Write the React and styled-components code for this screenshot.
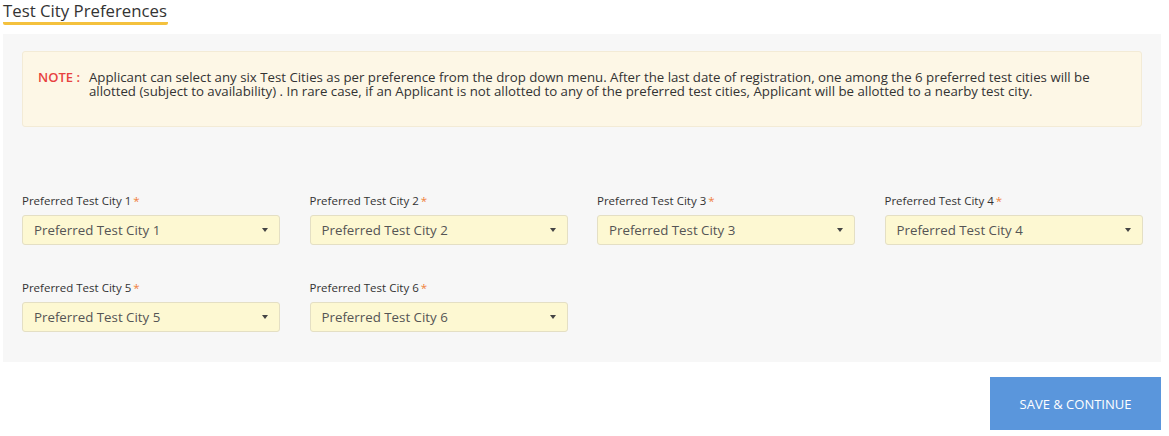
import React from "react"
import styled, { createGlobalStyle } from "styled-components"

const Global = createGlobalStyle`
  body{
    margin:0;
    background:#fff;
    font-family:"Open Sans","Noto Sans",Arial,sans-serif;
  }
`

const cities = [1, 2, 3, 4, 5, 6]

function App() {
  return (
    <Page>
      <Global />
      <Title>Test City Preferences</Title>
      <Panel>
        <Note>
          <NoteLabel>NOTE :</NoteLabel>
          <NoteText>
            Applicant can select any six Test Cities as per preference from the drop down menu. After the last date of registration, one among the 6 preferred test cities will be allotted (subject to availability) . In rare case, if an Applicant is not allotted to any of the preferred test cities, Applicant will be allotted to a nearby test city.
          </NoteText>
        </Note>
        <Grid>
          {cities.map(n => (
            <Field key={n}>
              <Label>
                Preferred Test City {n}<Star>*</Star>
              </Label>
              <Select>
                <span>Preferred Test City {n}</span>
                <Caret />
              </Select>
            </Field>
          ))}
        </Grid>
      </Panel>
      <Actions>
        <SaveButton>SAVE &amp; CONTINUE</SaveButton>
      </Actions>
    </Page>
  )
}

export default App

const Page = styled.div`
  padding:0 8px 0 3px;
`

const Title = styled.h2`
  display:inline-block;
  margin:0;
  padding:0 1px 3px 0;
  font-size:16.8px;
  font-weight:400;
  color:#333;
  line-height:17px;
  border-bottom:3px solid #f4c13d;
  border-radius:0 0 2px 2px;
`

const Panel = styled.div`
  margin-top:9px;
  background:#f7f7f7;
  padding:17px 19px 30px 19px;
`

const Note = styled.div`
  display:flex;
  background:#fdf7e6;
  border:1px solid #f3ebd6;
  border-radius:3px;
  padding:18px 15px 28px 15px;
`

const NoteLabel = styled.span`
  color:#e8423f;
  font-size:13px;
  font-weight:600;
  line-height:14px;
  margin-right:9px;
  white-space:nowrap;
`

const NoteText = styled.p`
  margin:0;
  font-size:13.25px;
  line-height:14px;
  color:#333;
`

const Grid = styled.div`
  display:grid;
  grid-template-columns:repeat(4, 258px);
  column-gap:29.5px;
  row-gap:36px;
  margin-top:67px;
`

const Field = styled.div`
  display:flex;
  flex-direction:column;
`

const Label = styled.label`
  font-size:11.5px;
  color:#333;
  line-height:14px;
  margin-bottom:7px;
`

const Star = styled.span`
  color:#f0803c;
  margin-left:2px;
`

const Select = styled.div`
  height:30px;
  box-sizing:border-box;
  display:flex;
  align-items:center;
  justify-content:space-between;
  padding:0 11px 0 11px;
  background:#fdf8d2;
  border:1px solid #e4dfc4;
  border-radius:3px;
  font-size:13.3px;
  color:#555;
`

const Caret = styled.span`
  width:0;
  height:0;
  border-left:3.5px solid transparent;
  border-right:3.5px solid transparent;
  border-top:4px solid #444;
`

const Actions = styled.div`
  display:flex;
  justify-content:flex-end;
  padding-top:15px;
`

const SaveButton = styled.button`
  width:171px;
  height:53px;
  background:#5a96dc;
  color:#fff;
  border:none;
  font-family:inherit;
  font-size:13px;
  cursor:pointer;
`
